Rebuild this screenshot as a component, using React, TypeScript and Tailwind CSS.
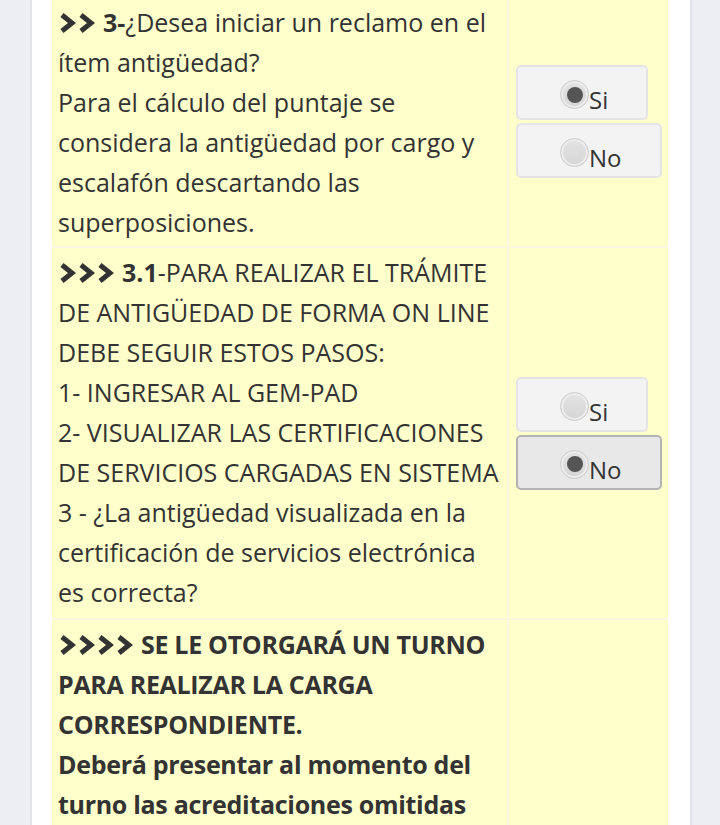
import React from "react";

const font = { fontFamily: '"Open Sans", "Noto Sans", sans-serif' };

function Chevrons({ count }: { count: number }) {
  return (
    <span className="inline-flex items-center mr-[7px] align-[-2px]">
      {Array.from({ length: count }).map((_, i) => (
        <svg key={i} width="20" height="22" viewBox="0 0 20 22" className="-mr-[1px]">
          <path d="M4 3 L14 11 L4 19" fill="none" stroke="#333333" strokeWidth="5" strokeLinejoin="miter" />
        </svg>
      ))}
    </span>
  );
}

function Radio({ label, checked, active }: { label: string; checked?: boolean; active?: boolean }) {
  return (
    <div
      className={
        "inline-flex items-start h-[55px] pl-[42px] pr-[38px] pt-[13px] rounded-[5px] border-2 " +
        (active ? "bg-[#e8e8e8] border-[#b3b3b3]" : "bg-[#f3f3f3] border-[#e4e4e4]")
      }
    >
      <span className="w-[29px] h-[29px] rounded-full border border-[#cccccc] bg-gradient-to-b from-[#e4e4e4] to-[#d5d5d5] flex items-center justify-center shadow-[inset_0_0_0_2px_#eeeeee]">
        {checked && <span className="w-[16px] h-[16px] rounded-full bg-[#555555]" />}
      </span>
      <span className="pt-[5px] text-[24px] leading-[30px] text-[#333333]">{label}</span>
    </div>
  );
}

function Options({ checked, active }: { checked: "si" | "no"; active?: boolean }) {
  return (
    <div className="flex flex-col items-start gap-[3px] pl-[7px]">
      <Radio label="Si" checked={checked === "si"} active={active && checked === "si"} />
      <Radio label="No" checked={checked === "no"} active={active && checked === "no"} />
    </div>
  );
}

export default function App() {
  return (
    <div className="min-h-screen bg-[#eceef4] overflow-hidden" style={font}>
      <div className="ml-[30px] w-[662px] min-h-screen bg-white border-x-2 border-[#e1e3ea] pl-[20px] pr-[22px] -mt-[3px]">
        <div className="text-[#333333] text-[25px] leading-[40px]">
          {/* fila 3 */}
          <div className="flex border-b-2 border-[#fbf6df]">
            <div className="w-[457px] shrink-0 bg-[#ffffcc] pl-[6px] pt-[5px] pb-[4px] border-r-2 border-[#fbf6df]">
              <Chevrons count={2} />
              <b className="font-bold">3-</b>¿Desea iniciar un reclamo en el
              <br />
              ítem antigüedad?
              <br />
              Para el cálculo del puntaje se
              <br />
              considera la antigüedad por cargo y
              <br />
              escalafón descartando las
              <br />
              superposiciones.
            </div>
            <div className="flex-1 bg-[#ffffcc] flex items-center">
              <Options checked="si" />
            </div>
          </div>

          {/* fila 3.1 */}
          <div className="flex border-b-2 border-[#fbf6df]">
            <div className="w-[457px] shrink-0 bg-[#ffffcc] pl-[6px] pt-[4px] pb-[6px] border-r-2 border-[#fbf6df]">
              <Chevrons count={3} />
              <b className="font-bold">3.1</b>-PARA REALIZAR EL TRÁMITE
              <br />
              DE ANTIGÜEDAD DE FORMA ON LINE
              <br />
              DEBE SEGUIR ESTOS PASOS:
              <br />
              1- INGRESAR AL GEM-PAD
              <br />
              2- VISUALIZAR LAS CERTIFICACIONES
              <br />
              DE SERVICIOS CARGADAS EN SISTEMA
              <br />
              3 - ¿La antigüedad visualizada en la
              <br />
              certificación de servicios electrónica
              <br />
              es correcta?
            </div>
            <div className="flex-1 bg-[#ffffcc] flex items-center">
              <Options checked="no" active />
            </div>
          </div>

          {/* fila turno */}
          <div className="flex">
            <div className="w-[457px] shrink-0 bg-[#ffffcc] pl-[6px] pt-[4px] pb-[60px] border-r-2 border-[#fbf6df] font-bold tracking-[-0.3px]">
              <Chevrons count={4} />
              SE LE OTORGARÁ UN TURNO
              <br />
              PARA REALIZAR LA CARGA
              <br />
              CORRESPONDIENTE.
              <br />
              Deberá presentar al momento del
              <br />
              turno las acreditaciones omitidas
            </div>
            <div className="flex-1 bg-[#ffffcc]" />
          </div>
        </div>
      </div>
    </div>
  );
}
